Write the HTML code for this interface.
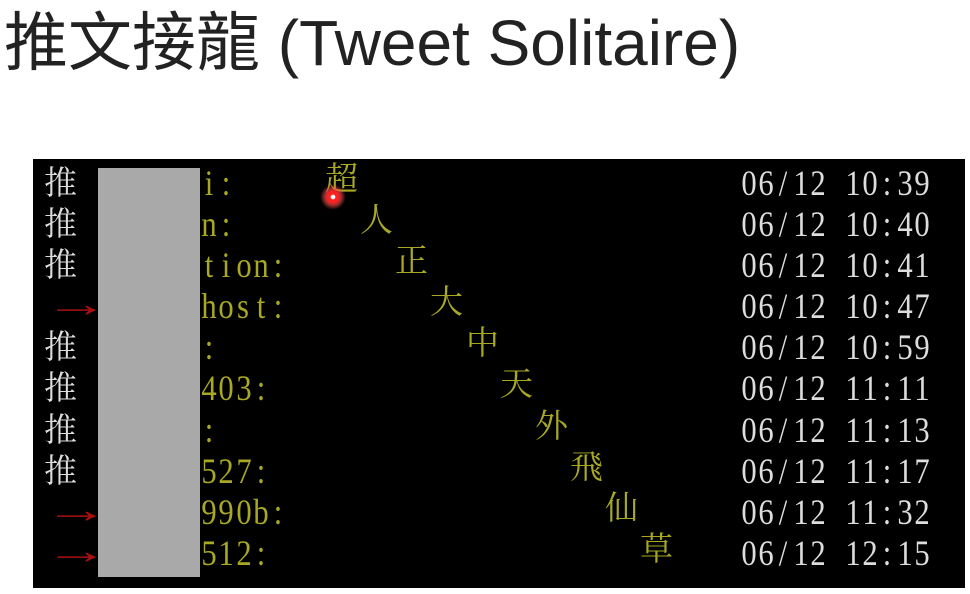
<!DOCTYPE html>
<html><head><meta charset="utf-8"><style>
body{margin:0;width:970px;height:594px;background:#fff;position:relative;overflow:hidden}
.t{position:absolute;left:4px;top:-8px;font:64px "Liberation Sans","Noto Sans CJK TC",sans-serif;color:#222;white-space:nowrap}
.box{position:absolute;left:33px;top:159px;width:932px;height:429px;background:#000}
.g{position:absolute;left:98px;top:168px;width:102px;height:409px;background:#a9a9a9}
.r{position:absolute;font:36px "Liberation Serif","Noto Serif CJK SC",serif;white-space:nowrap;line-height:40px}
.c{font-size:33px}
.w{color:#ddd}.y{color:#a8a824}.d{color:#aa1010}
.m span{display:inline-block;width:17.3px;text-align:center}
.m span b{display:inline-block;font-weight:normal;transform:scaleX(.85)}
.a{display:inline-block;transform:scaleX(1.8);transform-origin:left}
</style></head><body>
<div class="t">推文接龍 (Tweet Solitaire)</div>
<div class="box"></div>
<div class="r w c" style="left:44px;top:164px">推</div>
<div class="r w c" style="left:44px;top:205px">推</div>
<div class="r w c" style="left:44px;top:246px">推</div>
<div class="r d" style="left:44px;top:284px"><span class="a">→</span></div>
<div class="r w c" style="left:44px;top:328px">推</div>
<div class="r w c" style="left:44px;top:369px">推</div>
<div class="r w c" style="left:44px;top:411px">推</div>
<div class="r w c" style="left:44px;top:452px">推</div>
<div class="r d" style="left:44px;top:490px"><span class="a">→</span></div>
<div class="r d" style="left:44px;top:531px"><span class="a">→</span></div>
<div class="g"></div>
<div class="r y m" style="left:200px;top:163px">i:</div>
<div class="r y m" style="left:200px;top:204px">n:</div>
<div class="r y m" style="left:200px;top:245px">tion:</div>
<div class="r y m" style="left:200px;top:286px">host:</div>
<div class="r y m" style="left:200px;top:327px">:</div>
<div class="r y m" style="left:200px;top:368px">403:</div>
<div class="r y m" style="left:200px;top:410px">:</div>
<div class="r y m" style="left:200px;top:451px">527:</div>
<div class="r y m" style="left:200px;top:492px">990b:</div>
<div class="r y m" style="left:200px;top:533px">512:</div>
<div class="r y c" style="left:325px;top:160px">超</div>
<div class="r y c" style="left:360px;top:201px">人</div>
<div class="r y c" style="left:395px;top:242px">正</div>
<div class="r y c" style="left:430px;top:283px">大</div>
<div class="r y c" style="left:466px;top:324px">中</div>
<div class="r y c" style="left:500px;top:365px">天</div>
<div class="r y c" style="left:535px;top:407px">外</div>
<div class="r y c" style="left:570px;top:448px">飛</div>
<div class="r y c" style="left:605px;top:489px">仙</div>
<div class="r y c" style="left:640px;top:530px">草</div>
<div style="position:absolute;left:320px;top:184px;width:26px;height:26px;border-radius:50%;background:radial-gradient(circle,#fff 0 10%,#ff2020 15% 30%,rgba(255,80,80,.6) 45%,rgba(255,150,150,0) 70%)"></div>
<div class="r w m" style="left:740px;top:163px">06/12 10:39</div>
<div class="r w m" style="left:740px;top:204px">06/12 10:40</div>
<div class="r w m" style="left:740px;top:245px">06/12 10:41</div>
<div class="r w m" style="left:740px;top:286px">06/12 10:47</div>
<div class="r w m" style="left:740px;top:327px">06/12 10:59</div>
<div class="r w m" style="left:740px;top:368px">06/12 11:11</div>
<div class="r w m" style="left:740px;top:410px">06/12 11:13</div>
<div class="r w m" style="left:740px;top:451px">06/12 11:17</div>
<div class="r w m" style="left:740px;top:492px">06/12 11:32</div>
<div class="r w m" style="left:740px;top:533px">06/12 12:15</div>
<script>
document.querySelectorAll('.m').forEach(function(e){var t=e.textContent;e.innerHTML='';for(var i=0;i<t.length;i++){var s=document.createElement('span');var b=document.createElement('b');b.textContent=t[i]===' '?'\u00a0':t[i];s.appendChild(b);e.appendChild(s);}});
</script>
</body></html>
